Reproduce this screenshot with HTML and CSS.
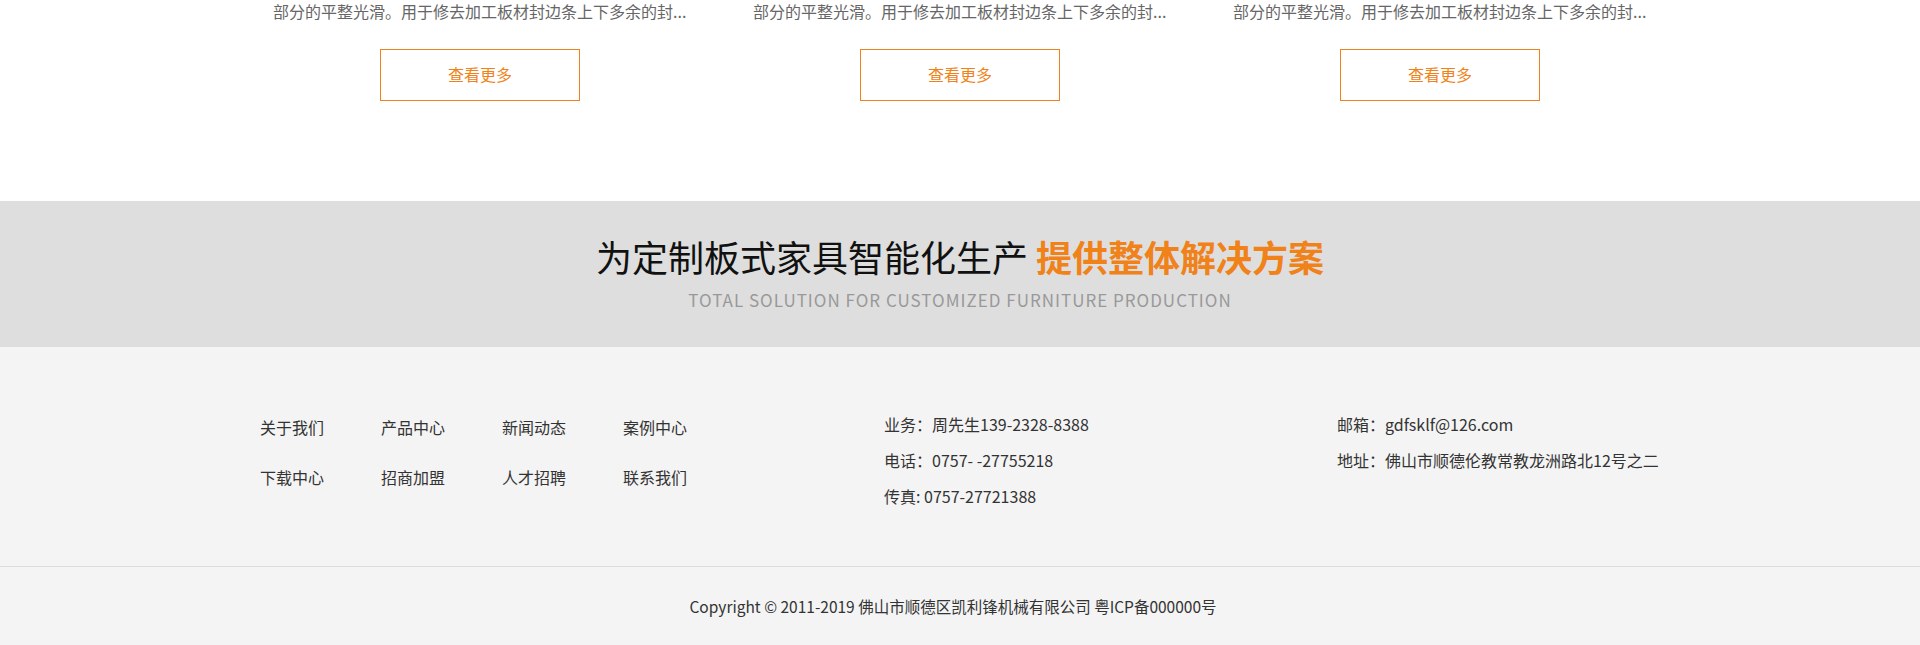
FILE: index.html
```html
<!DOCTYPE html>
<html lang="zh-CN">
<head>
<meta charset="utf-8">
<title>凯利锋机械</title>
<link rel="stylesheet" href="styles.css">
</head>
<body>
<section class="products">
  <div class="product-grid">
    <div class="card">
      <p class="card-desc">部分的平整光滑。用于修去加工板材封边条上下多余的封...</p>
      <a class="more-btn" href="#">查看更多</a>
    </div>
    <div class="card">
      <p class="card-desc">部分的平整光滑。用于修去加工板材封边条上下多余的封...</p>
      <a class="more-btn" href="#">查看更多</a>
    </div>
    <div class="card">
      <p class="card-desc">部分的平整光滑。用于修去加工板材封边条上下多余的封...</p>
      <a class="more-btn" href="#">查看更多</a>
    </div>
  </div>
</section>

<section class="banner">
  <h2 class="banner-title">为定制板式家具智能化生产 <strong>提供整体解决方案</strong></h2>
  <p class="banner-sub">TOTAL SOLUTION FOR CUSTOMIZED FURNITURE PRODUCTION</p>
</section>

<footer class="footer">
  <div class="footer-main">
    <ul class="footer-links">
      <li><a href="#">关于我们</a></li>
      <li><a href="#">产品中心</a></li>
      <li><a href="#">新闻动态</a></li>
      <li><a href="#">案例中心</a></li>
      <li><a href="#">下载中心</a></li>
      <li><a href="#">招商加盟</a></li>
      <li><a href="#">人才招聘</a></li>
      <li><a href="#">联系我们</a></li>
    </ul>
    <div class="contact contact-a">
      <p>业务：周先生139-2328-8388</p>
      <p>电话：0757- -27755218</p>
      <p>传真: 0757-27721388</p>
    </div>
    <div class="contact contact-b">
      <p>邮箱：gdfsklf@126.com</p>
      <p>地址：佛山市顺德伦教常教龙洲路北12号之二</p>
    </div>
  </div>
  <div class="copyright">Copyright © 2011-2019 佛山市顺德区凯利锋机械有限公司 粤ICP备000000号</div>
</footer>
</body>
</html>
```

FILE: styles.css
```css
* { box-sizing: border-box; }
html, body { margin: 0; padding: 0; }
body {
  width: 1920px;
  font-family: "Noto Sans CJK SC", "Noto Sans", sans-serif;
  color: #333;
  background: #fff;
}
a { text-decoration: none; color: inherit; }
p, h2, ul { margin: 0; padding: 0; }
ul { list-style: none; }

.products {
  height: 201px;
  background: #fff;
}
.product-grid {
  width: 1440px;
  margin: 0 auto;
  display: grid;
  grid-template-columns: repeat(3, 1fr);
}
.card {
  display: flex;
  flex-direction: column;
  align-items: center;
  padding: 0 32px;
}
.card-desc {
  align-self: stretch;
  font-size: 16px;
  line-height: 23px;
  color: #666;
  padding-left: 1px;
  white-space: nowrap;
}
.more-btn {
  margin-top: 26px;
  width: 200px;
  height: 52px;
  border: 1px solid #f08219;
  color: #f08219;
  font-size: 16px;
  display: flex;
  align-items: center;
  justify-content: center;
  padding-bottom: 2px;
}

.banner {
  height: 146px;
  background: #dedede;
  padding-top: 35px;
  text-align: center;
}
.banner-title {
  font-size: 36px;
  line-height: 40px;
  font-weight: 400;
  color: #111;
}
.banner-title strong {
  color: #f08219;
  font-weight: 700;
}
.banner-sub {
  margin-top: 12px;
  font-size: 17px;
  line-height: 24px;
  color: #999;
  letter-spacing: 1px;
}

.footer {
  background: #f4f4f4;
}
.footer-main {
  width: 1400px;
  margin: 0 auto;
  padding: 59px 0 52px 0;
  display: flex;
  align-items: flex-start;
}
.footer-links {
  width: 624px;
  display: grid;
  grid-template-columns: repeat(4, 121px);
  row-gap: 10px;
  padding-top: 1px;
  font-size: 16px;
  line-height: 40px;
  color: #333;
}
.contact {
  font-size: 16px;
  line-height: 36px;
  color: #333;
}
.contact-a { width: 453px; }
.copyright {
  border-top: 1px solid #dcdcdc;
  height: 79px;
  line-height: 78px;
  text-align: center;
  font-size: 15.5px;
  color: #333;
  padding-right: 14px;
}
```
